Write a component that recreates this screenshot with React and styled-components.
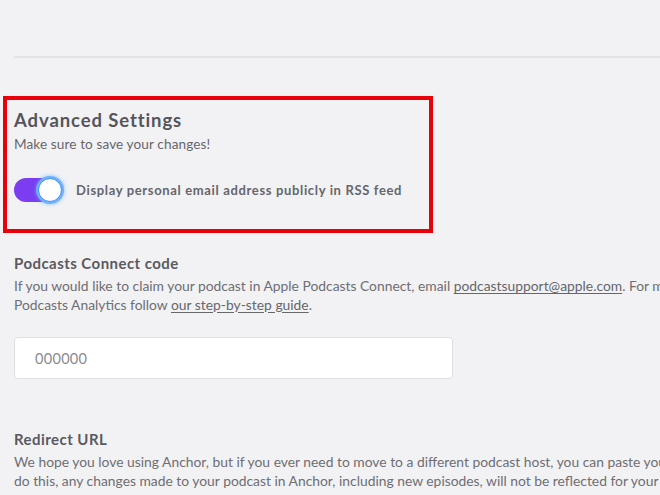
import React from "react";
import styled, { createGlobalStyle } from "styled-components";

const GlobalStyle = createGlobalStyle`
  html, body {
    margin: 0;
    padding: 0;
    background: #f2f2f4;
    overflow: hidden;
  }
  body {
    font-family: Lato, "Open Sans", sans-serif;
    color: #66666b;
  }
`;

const Page = styled.div`
  width: 660px;
  height: 495px;
  overflow: hidden;
  padding: 56px 0 0 14px;
  box-sizing: border-box;
`;

const Divider = styled.hr`
  margin: 0;
  border: 0;
  border-top: 2px solid #e3e3e7;
  width: 700px;
`;

const Highlight = styled.section`
  margin: 38px 0 0 -11px;
  width: 430px;
  height: 137px;
  box-sizing: border-box;
  border: 4px solid #e8000b;
  padding: 7px 0 0 7px;
`;

const Heading = styled.h2`
  margin: 0;
  font-size: 18.5px;
  font-weight: 700;
  color: #55555b;
  line-height: 26px;
  letter-spacing: 0.9px;
`;

const Hint = styled.p`
  margin: 2px 0 0;
  font-size: 13.6px;
  line-height: 18px;
  color: #66666b;
  letter-spacing: 0.1px;
`;

const ToggleRow = styled.label`
  display: flex;
  align-items: center;
  gap: 14px;
  margin-top: 25px;
`;

const Track = styled.span`
  position: relative;
  display: inline-block;
  width: 48px;
  height: 24px;
  border-radius: 12px;
  background: #7b3cf2;
  flex-shrink: 0;
`;

const Knob = styled.span`
  position: absolute;
  top: 0px;
  right: 0px;
  width: 22px;
  height: 22px;
  border-radius: 50%;
  background: #fff;
  border: 1px solid #3d8bf0;
  box-shadow: 0 0 0 2px #6fb2ff, 0 0 4px 2px rgba(90, 170, 255, 0.7);
`;

const ToggleText = styled.span`
  font-size: 13px;
  font-weight: 700;
  color: #66666b;
  letter-spacing: 0.65px;
`;

const Field = styled.div`
  margin-top: ${(p) => p.$gap}px;
`;

const Label = styled.h3`
  margin: 0;
  font-size: 15px;
  font-weight: 700;
  line-height: 20px;
  color: #5a5a60;
  letter-spacing: 0.45px;
`;

const Body = styled.p`
  margin: 4px 0 0;
  font-size: 13.85px;
  line-height: 18.5px;
  color: #6e6e73;
  white-space: nowrap;

  a {
    color: #66666b;
    text-decoration: underline;
    text-underline-offset: 2px;
  }
`;

const Input = styled.input`
  display: block;
  margin-top: 23px;
  width: 439px;
  height: 42px;
  box-sizing: border-box;
  padding: 0 20px;
  border: 1px solid #e0e0e4;
  border-radius: 4px;
  background: #fff;
  font-family: Lato, "Open Sans", sans-serif;
  font-size: 14.5px;
  letter-spacing: 0.3px;
  outline: none;

  &::placeholder {
    color: #8a8a8f;
  }
`;

export default function App() {
  return (
    <>
      <GlobalStyle />
      <Page>
        <Divider />
        <Highlight>
          <Heading>Advanced Settings</Heading>
          <Hint>Make sure to save your changes!</Hint>
          <ToggleRow>
            <Track>
              <Knob />
            </Track>
            <ToggleText>Display personal email address publicly in RSS feed</ToggleText>
          </ToggleRow>
        </Highlight>

        <Field $gap={20}>
          <Label>Podcasts Connect code</Label>
          <Body>
            If you would like to claim your podcast in Apple Podcasts Connect, email{" "}
            <a href="#">podcastsupport@apple.com</a>. For more information on how to access Apple
            <br />
            Podcasts Analytics follow <a href="#">our step-by-step guide</a>.
          </Body>
          <Input placeholder="000000" />
        </Field>

        <Field $gap={50}>
          <Label>Redirect URL</Label>
          <Body>
            We hope you love using Anchor, but if you ever need to move to a different podcast host, you can paste your new RSS feed URL here. Once you
            <br />
            do this, any changes made to your podcast in Anchor, including new episodes, will not be reflected for your listeners.
          </Body>
        </Field>
      </Page>
    </>
  );
}
